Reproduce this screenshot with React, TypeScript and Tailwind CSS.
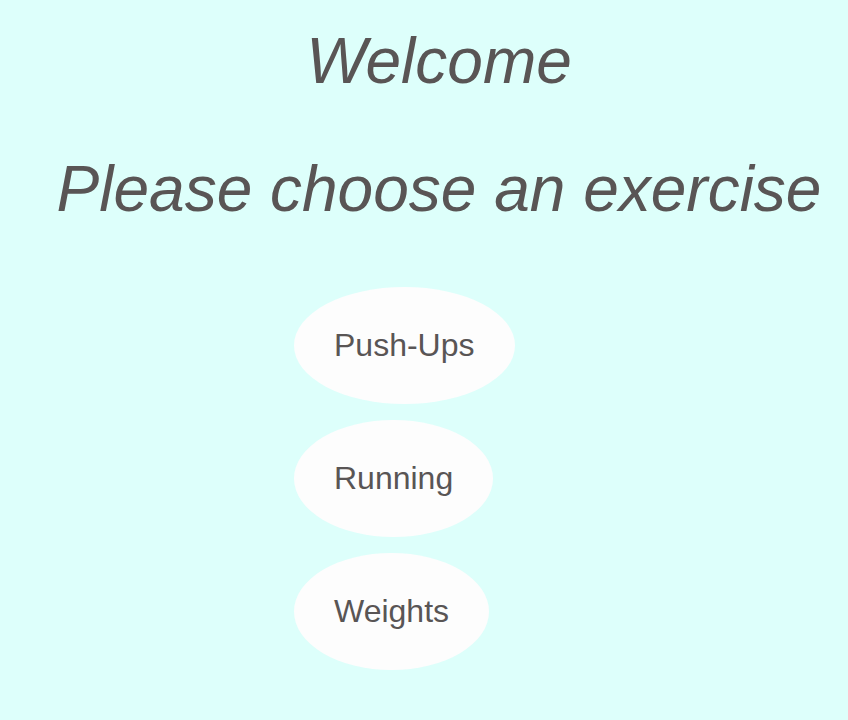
import React from 'react';

const exercises = ['Push-Ups', 'Running', 'Weights'];

export default function App() {
    return (
        <div className="min-h-[720px] w-full bg-[#ddfffb] text-[#595555] font-['Liberation_Sans',Arial,sans-serif]">
            <div className="pl-[30px] pt-[25px] text-center italic text-[64px] leading-[1.15]">
                <h1>Welcome</h1>
                <h2 className="mt-[54px]">Please choose an exercise</h2>
            </div>
            <div className="mt-[61px] ml-[294px] flex flex-col items-start gap-4">
                {exercises.map((name) => (
                    <button
                        key={name}
                        className="rounded-[50%] bg-[#fdfdfd] p-10 text-[32px] leading-[1.15] text-[#595555]"
                    >
                        {name}
                    </button>
                ))}
            </div>
        </div>
    );
}
